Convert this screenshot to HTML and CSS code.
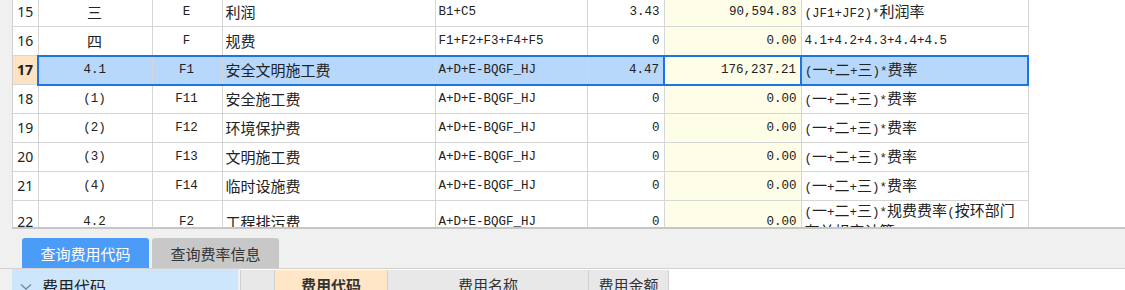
FILE: index.html
```html
<!DOCTYPE html>
<html lang="zh-CN">
<head>
  <meta charset="UTF-8" />
  <title>费用汇总</title>
  <link rel="stylesheet" href="styles.css">
</head>
<body>

  <div class="sheet">
    <table class="grid">
      <colgroup>
        <col style="width:25px">
        <col style="width:114px">
        <col style="width:70px">
        <col style="width:213px">
        <col style="width:152px">
        <col style="width:77px">
        <col style="width:137px">
        <col style="width:227px">
      </colgroup>
      <tr>
        <td class="no">15</td>
        <td class="c zh">三</td>
        <td class="c">E</td>
        <td class="zh">利润</td>
        <td>B1+C5</td>
        <td class="r">3.43</td>
        <td class="r amt">90,594.83</td>
        <td>(JF1+JF2)*<span class="zh">利润率</span></td>
      </tr>
      <tr>
        <td class="no">16</td>
        <td class="c zh">四</td>
        <td class="c">F</td>
        <td class="zh">规费</td>
        <td>F1+F2+F3+F4+F5</td>
        <td class="r">0</td>
        <td class="r amt">0.00</td>
        <td>4.1+4.2+4.3+4.4+4.5</td>
      </tr>
      <tr class="cur">
        <td class="no">17</td>
        <td class="c first">4.1</td>
        <td class="c">F1</td>
        <td class="zh">安全文明施工费</td>
        <td>A+D+E-BQGF_HJ</td>
        <td class="r">4.47</td>
        <td class="r amt focus">176,237.21</td>
        <td class="last">(<span class="zh">一</span>+<span class="zh">二</span>+<span class="zh">三</span>)*<span class="zh">费率</span></td>
      </tr>
      <tr>
        <td class="no">18</td>
        <td class="c">(1)</td>
        <td class="c">F11</td>
        <td class="zh">安全施工费</td>
        <td>A+D+E-BQGF_HJ</td>
        <td class="r">0</td>
        <td class="r amt">0.00</td>
        <td>(<span class="zh">一</span>+<span class="zh">二</span>+<span class="zh">三</span>)*<span class="zh">费率</span></td>
      </tr>
      <tr>
        <td class="no">19</td>
        <td class="c">(2)</td>
        <td class="c">F12</td>
        <td class="zh">环境保护费</td>
        <td>A+D+E-BQGF_HJ</td>
        <td class="r">0</td>
        <td class="r amt">0.00</td>
        <td>(<span class="zh">一</span>+<span class="zh">二</span>+<span class="zh">三</span>)*<span class="zh">费率</span></td>
      </tr>
      <tr>
        <td class="no">20</td>
        <td class="c">(3)</td>
        <td class="c">F13</td>
        <td class="zh">文明施工费</td>
        <td>A+D+E-BQGF_HJ</td>
        <td class="r">0</td>
        <td class="r amt">0.00</td>
        <td>(<span class="zh">一</span>+<span class="zh">二</span>+<span class="zh">三</span>)*<span class="zh">费率</span></td>
      </tr>
      <tr>
        <td class="no">21</td>
        <td class="c">(4)</td>
        <td class="c">F14</td>
        <td class="zh">临时设施费</td>
        <td>A+D+E-BQGF_HJ</td>
        <td class="r">0</td>
        <td class="r amt">0.00</td>
        <td>(<span class="zh">一</span>+<span class="zh">二</span>+<span class="zh">三</span>)*<span class="zh">费率</span></td>
      </tr>
      <tr class="tall">
        <td class="no">22</td>
        <td class="c">4.2</td>
        <td class="c">F2</td>
        <td class="zh">工程排污费</td>
        <td>A+D+E-BQGF_HJ</td>
        <td class="r">0</td>
        <td class="r amt">0.00</td>
        <td>(<span class="zh">一</span>+<span class="zh">二</span>+<span class="zh">三</span>)*<span class="zh">规费费率</span>(<span class="zh">按环部门有关规定计算</span>)</td>
      </tr>
    </table>
  </div>

  <div class="tabs">
    <div class="tab on">查询费用代码</div>
    <div class="tab">查询费率信息</div>
  </div>

  <div class="panel">
    <div class="strip"></div>
    <div class="tree">
      <svg class="chev" width="12" height="8" viewBox="0 0 12 8">
        <polyline points="1,1.5 6,6 11,1.5" fill="none" stroke="#7a8a99" stroke-width="1.4" />
      </svg>
      <span>费用代码</span>
    </div>
    <div class="split"></div>
    <div class="head">
      <div class="h-no"></div>
      <div class="h-code">费用代码</div>
      <div class="h-name">费用名称</div>
      <div class="h-amt">费用金额</div>
    </div>
  </div>

</body>
</html>
```

FILE: styles.css
```css
body {
  margin: 0;
  background-color: #f0f0f0;
  font-family: "Liberation Mono", "Noto Sans CJK SC", monospace;
  color: #222;
  overflow: hidden;
}

/* upper grid */
.sheet {
  margin-left: 12px;
  height: 227px;
  overflow: hidden;
  background-color: #fff;
  border-left: 1px solid #d0d0d0;
  border-bottom: 2px solid #c6c6c6;
}
.grid {
  table-layout: fixed;
  border-collapse: collapse;
  width: 1015px;
  margin-top: -3px;
  font-size: 12.5px;
}
.grid tr {
  height: 29px;
}
.grid tr.tall {
  height: 40px;
}
.grid td {
  border: 1px solid #d6d6d6;
  padding: 0 4px 0 3px;
  line-height: 18px;
  white-space: normal;
  overflow: hidden;
  vertical-align: middle;
}
.grid td:first-child {
  border-left: none;
}
.zh {
  font-family: "Noto Sans CJK SC", sans-serif;
  font-size: 15px;
}
.grid td.no {
  font-family: "Noto Sans", "Liberation Sans", sans-serif;
  font-size: 14px;
  text-align: center;
  padding: 0;
}
.c {
  text-align: center;
}
.r {
  text-align: right;
}
.grid td.amt {
  background-color: #fefde8;
}

/* selected row */
.grid tr.cur td {
  background-color: #b7d7fb;
  border-top: 2px solid #1b74e4;
  border-bottom: 2px solid #1b74e4;
}
.grid tr.cur td.no {
  background-color: #fde3c2;
  font-weight: bold;
  border-top: 1px solid #d6d6d6;
  border-bottom: 1px solid #d6d6d6;
}
.grid tr.cur td.first {
  border-left: 2px solid #1b74e4;
}
.grid tr.cur td.last {
  border-right: 2px solid #1b74e4;
}
.grid tr.cur td.focus {
  background-color: #fefde8;
  border-left: 2px solid #1b74e4;
  border-right: 2px solid #1b74e4;
}

/* tabs */
.tabs {
  display: flex;
  align-items: flex-end;
  gap: 3px;
  height: 39px;
  padding-left: 22px;
}
.tab {
  width: 127px;
  height: 30px;
  display: flex;
  align-items: center;
  justify-content: center;
  border-radius: 3px 3px 0 0;
  background-color: #c8c8c8;
  color: #333;
  font-family: "Noto Sans CJK SC", sans-serif;
  font-size: 15px;
}
.tab.on {
  background-color: #4a9cf7;
  color: #fff;
}

/* lower panel */
.panel {
  display: flex;
  height: 21px;
  overflow: hidden;
  background-color: #fff;
  border-top: 1px solid #d2d2d2;
  font-family: "Noto Sans CJK SC", sans-serif;
}
.strip {
  width: 12px;
  background-color: #f0f0f0;
}
.tree {
  width: 226px;
  background-color: #cde6fb;
  display: flex;
  align-items: flex-start;
  gap: 10px;
  padding: 5px 0 0 8px;
  box-sizing: border-box;
  font-size: 16px;
  color: #222;
}
.chev {
  margin-top: 9px;
}
.split {
  width: 2px;
  background-color: #f0f0f0;
}
.head {
  display: flex;
  margin-top: 1px;
  align-items: flex-start;
}
.head div {
  height: 40px;
  box-sizing: border-box;
  border-left: 1px solid #d0d0d0;
  background-color: #e8e8e8;
  text-align: center;
  font-size: 15px;
  line-height: 22px;
  padding-top: 4px;
  color: #333;
}
.h-no {
  width: 34px;
}
.h-code {
  width: 113px;
  font-weight: bold;
  background-color: #ffe6c6 !important;
}
.h-name {
  width: 201px;
}
.h-amt {
  width: 81px;
  border-right: 1px solid #d0d0d0;
}
```
